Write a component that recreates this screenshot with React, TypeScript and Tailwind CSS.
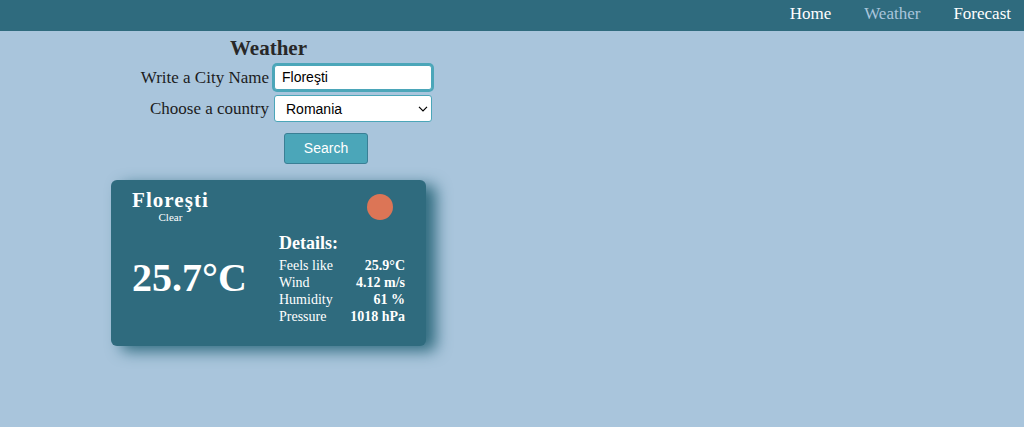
import { useState } from 'react';

const details = [
  { label: 'Feels like', value: '25.9°C' },
  { label: 'Wind', value: '4.12 m/s' },
  { label: 'Humidity', value: '61 %' },
  { label: 'Pressure', value: '1018 hPa' },
];

function NavBar() {
  return (
    <nav className="flex h-[31px] items-center justify-end gap-[33px] bg-[#2f6b7e] pr-[13px] pb-1 text-[17px] leading-5 text-white">
      <a href="#home">Home</a>
      <a href="#weather" aria-current="page" className="text-[#a9c5dc]">
        Weather
      </a>
      <a href="#forecast">Forecast</a>
    </nav>
  );
}

function SearchForm() {
  const [city, setCity] = useState('Floreşti');
  const [country, setCountry] = useState('Romania');

  return (
    <form
      className="grid grid-cols-[158px_158px] items-center gap-x-[5px] gap-y-[5px] text-[17px] leading-6 text-[#1c1c1c]"
      onSubmit={(e) => e.preventDefault()}
    >
      <label htmlFor="city" className="text-right whitespace-nowrap">
        Write a City Name
      </label>
      <input
        id="city"
        type="text"
        value={city}
        onChange={(e) => setCity(e.target.value)}
        className="h-[25px] w-full rounded-[3px] border border-[#4ba6b9] bg-white px-[7px] pb-0.5 font-['Liberation_Sans',sans-serif] text-sm text-black ring-2 ring-[#4ba6b9] outline-none"
      />
      <label htmlFor="country" className="text-right whitespace-nowrap">
        Choose a country
      </label>
      <div className="grid items-center">
        <select
          id="country"
          value={country}
          onChange={(e) => setCountry(e.target.value)}
          className="col-start-1 row-start-1 h-[27px] w-full appearance-none rounded-[3px] border border-[#4ba6b9] bg-white pl-[11px] font-['Liberation_Sans',sans-serif] text-sm text-black outline-none"
        >
          <option>Romania</option>
        </select>
        <svg
          viewBox="0 0 10 6"
          className="pointer-events-none col-start-1 row-start-1 mr-1 h-1.5 w-2.5 justify-self-end"
          fill="none"
          stroke="black"
          strokeWidth="1.2"
          aria-hidden="true"
        >
          <path d="M1 0.8 L5 4.8 L9 0.8" />
        </svg>
      </div>
      <button
        type="submit"
        className="col-start-2 mt-1.5 ml-2.5 h-[31px] w-[84px] rounded-[3px] border border-[#3a7f95] bg-[#4ba6b9] pb-0.5 font-['Liberation_Sans',sans-serif] text-sm text-white"
      >
        Search
      </button>
    </form>
  );
}

function WeatherCard() {
  return (
    <article className="mt-4 w-[315px] rounded-md bg-[#2f6b7e] px-[21px] pt-2.5 pb-[21px] text-white shadow-[10px_5px_15px_#2f6b7e]">
      <header className="flex items-start justify-between">
        <div className="text-center">
          <h2 className="text-[21px] leading-[21px] font-bold tracking-wider">Floreşti</h2>
          <p className="text-[11px] leading-3">Clear</p>
        </div>
        <svg viewBox="0 0 26 26" className="mt-1 mr-3 size-[26px]" role="img" aria-label="Clear sky">
          <circle cx="13" cy="13" r="13" fill="#dc7556" />
        </svg>
      </header>
      <div className="mt-2 flex justify-between">
        <p className="pt-[26px] text-[40px] leading-[42px] font-bold">25.7°C</p>
        <section className="w-[126px]">
          <h3 className="mb-0.5 text-lg leading-6 font-bold">Details:</h3>
          <table className="w-full text-sm leading-[17px]">
            <tbody>
              {details.map(({ label, value }) => (
                <tr key={label}>
                  <th scope="row" className="p-0 text-left font-normal whitespace-nowrap">
                    {label}
                  </th>
                  <td className="p-0 text-right font-bold whitespace-nowrap">{value}</td>
                </tr>
              ))}
            </tbody>
          </table>
        </section>
      </div>
    </article>
  );
}

export default function App() {
  return (
    <div className="min-h-screen bg-[#a9c5dc] font-['Liberation_Serif',serif]">
      <NavBar />
      <main className="pt-[5px] pb-10 pl-[111px]">
        <h1 className="mb-[5px] w-[315px] text-center text-[21px] leading-6 font-bold text-[#282828]">Weather</h1>
        <SearchForm />
        <WeatherCard />
      </main>
    </div>
  );
}
